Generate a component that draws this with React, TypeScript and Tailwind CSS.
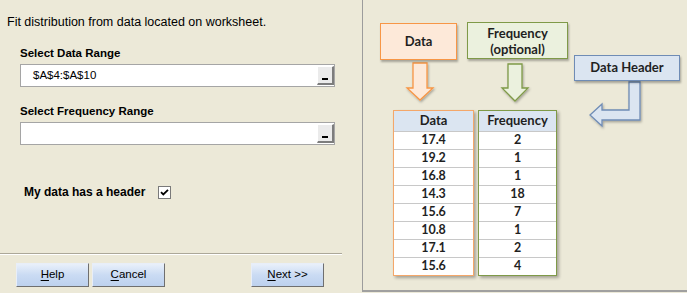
import React from "react";

const dataRows: [string, string][] = [
  ["17.4", "2"],
  ["19.2", "1"],
  ["16.8", "1"],
  ["14.3", "18"],
  ["15.6", "7"],
  ["10.8", "1"],
  ["17.1", "2"],
  ["15.6", "4"],
];

function RangeInput({ value }: { value: string }) {
  return (
    <div className="flex h-[23px] w-[315px] items-stretch border border-[#a5a5a5] bg-white">
      <div className="flex flex-1 items-center pl-[12px] text-[11.5px] text-black">{value}</div>
      <div className="my-[1px] flex w-[17px] items-end justify-center border-t border-l border-t-white border-l-white border-r-2 border-b-2 border-r-[#7d7d7d] border-b-[#7d7d7d] bg-[#ebebeb] pb-[3px]">
        <div className="h-[2px] w-[6px] bg-black" />
      </div>
    </div>
  );
}

function XPButton({ ul, rest, className = "" }: { ul: string; rest: string; className?: string }) {
  return (
    <button
      className={
        "flex h-[24px] w-[73px] items-center justify-center border border-t-[#e8eef8] border-l-[#e8eef8] border-r-[#6f6f6f] border-b-[#6f6f6f] bg-linear-to-b from-[#e9f0fa] via-[#cadbf3] to-[#bdd1ee] text-[11.5px] text-black " +
        className
      }
    >
      <span>
        <span className="underline underline-offset-2">{ul}</span>
        {rest}
      </span>
    </button>
  );
}

export default function App() {
  return (
    <div
      className="flex h-[293px] w-[687px] overflow-hidden bg-[#ece9d8]"
      style={{ fontFamily: '"Liberation Sans", Arial, sans-serif' }}
    >
      {/* Left panel */}
      <div className="flex w-[362px] flex-col">
        <div className="pl-[7px] pt-[14px] text-[12.5px] leading-[16px] text-black">
          Fit distribution from data located on worksheet.
        </div>
        <div className="flex flex-col pl-[20px]">
          <div className="mt-[16px] text-[11.5px] font-bold leading-[14px] text-black">Select Data Range</div>
          <div className="mt-[4px]">
            <RangeInput value="$A$4:$A$10" />
          </div>
          <div className="mt-[17px] text-[11.5px] font-bold leading-[14px] text-black">Select Frequency Range</div>
          <div className="mt-[4px]">
            <RangeInput value="" />
          </div>
          <div className="mt-[40px] flex items-center pl-[4px]">
            <span className="text-[12px] font-bold leading-[14px] text-black">My data has a header</span>
            <div className="ml-[13px] flex h-[13px] w-[13px] items-center justify-center border border-[#7a7a7a] bg-white">
              <svg width="9" height="9" viewBox="0 0 9 9">
                <path d="M1 4.2 L3.3 6.5 L8 1.8" fill="none" stroke="#000" strokeWidth="1.8" />
              </svg>
            </div>
          </div>
        </div>
        <div className="mt-auto">
          <div className="w-[342px] border-t border-b border-t-[#aca899] border-b-white" />
          <div className="mt-[8px] mb-[6px] flex pl-[16px]">
            <XPButton ul="H" rest="elp" />
            <XPButton ul="C" rest="ancel" className="ml-[3px]" />
            <XPButton ul="N" rest="ext >>" className="ml-[86px]" />
          </div>
        </div>
      </div>

      {/* Right panel: diagram */}
      <div
        className="relative h-[292px] flex-1 border-l border-b-2 border-l-[#9c9c9c] border-b-[#a0a0a0]"
        style={{ fontFamily: 'Lato, "Open Sans", sans-serif' }}
      >
        <svg className="absolute inset-0" width="324" height="290" viewBox="0 0 324 290">
          <defs>
            <filter id="sh" x="-20%" y="-20%" width="140%" height="140%">
              <feDropShadow dx="1" dy="1.5" stdDeviation="1" floodColor="#000" floodOpacity="0.3" />
            </filter>
          </defs>
          <polygon
            points="50,63 64,63 64,88 70,88 57,100 44,88 50,88"
            fill="#fde9d9"
            stroke="#f79646"
            strokeWidth="1.3"
            filter="url(#sh)"
          />
          <polygon
            points="145,64 159,64 159,88 165,88 152,101 139,88 145,88"
            fill="#ebf1de"
            stroke="#7f9a48"
            strokeWidth="1.3"
            filter="url(#sh)"
          />
          <polygon
            points="266,82 277,82 277,120 239,120 239,126 227,115 239,104 239,110 266,110"
            fill="#dbe5f1"
            stroke="#6f8cb5"
            strokeWidth="1.3"
            filter="url(#sh)"
          />
        </svg>

        <div className="absolute left-[17px] top-[23px] flex h-[37px] w-[77px] items-center justify-center border-[1.5px] border-[#f79646] bg-[#fde9d9] text-[13px] font-bold text-[#1f1f1f] shadow-[1px_1.5px_2px_rgba(0,0,0,0.3)]">
          Data
        </div>
        <div className="absolute left-[104px] top-[22px] flex h-[37px] w-[101px] flex-col items-center justify-center border-[1.5px] border-[#7f9a48] bg-[#ebf1de] text-[13px] font-bold leading-[16px] text-[#1f1f1f] shadow-[1px_1.5px_2px_rgba(0,0,0,0.3)]">
          <span>Frequency</span>
          <span>(optional)</span>
        </div>
        <div className="absolute left-[211px] top-[55px] flex h-[26px] w-[106px] items-center justify-center border-[1.5px] border-[#6f8cb5] bg-[#dbe5f1] text-[13px] font-bold text-[#1f1f1f] shadow-[1px_1.5px_2px_rgba(0,0,0,0.3)]">
          Data Header
        </div>

        {/* Table */}
        <div className="absolute left-[30px] top-[110px] flex gap-[4px] text-[12.5px] font-bold text-[#1f1f1f]">
          <div className="flex w-[81px] flex-col border-[1.5px] border-[#f4a76a] bg-white shadow-[2px_2px_3px_rgba(0,0,0,0.3)]">
            <div className="flex h-[20px] items-center justify-center bg-[#dbe5f1] text-[13px]">Data</div>
            {dataRows.map(([d], i) => (
              <div key={i} className="flex h-[18px] items-center justify-center border-t border-[#c8c8c8]">
                {d}
              </div>
            ))}
          </div>
          <div className="flex w-[79px] flex-col border-[1.5px] border-[#7f9a48] bg-white shadow-[2px_2px_3px_rgba(0,0,0,0.3)]">
            <div className="flex h-[20px] items-center justify-center bg-[#dbe5f1] text-[13px]">Frequency</div>
            {dataRows.map(([, f], i) => (
              <div key={i} className="flex h-[18px] items-center justify-center border-t border-[#c8c8c8]">
                {f}
              </div>
            ))}
          </div>
        </div>
      </div>
    </div>
  );
}
